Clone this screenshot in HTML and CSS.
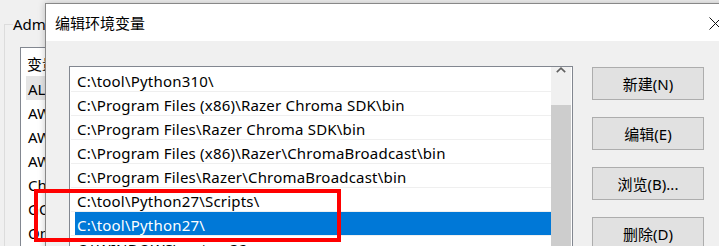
FILE: index.html
```html
<!DOCTYPE html>
<html lang="zh-CN">
<head>
<meta charset="utf-8">
<title>编辑环境变量</title>
<link rel="stylesheet" href="styles.css">
</head>
<body>
<div class="desk">
  <div class="bgwin">
    <fieldset class="group">
      <legend>Administrator 的用户变量(U)</legend>
      <div class="bglist">
        <div class="bghead">变量</div>
        <div class="bgrow sel">ALLUSERSPROFILE</div>
        <div class="bgrow">AWS_ACCESS_KEY</div>
        <div class="bgrow">AWS_REGION</div>
        <div class="bgrow">AWS_SECRET_KEY</div>
        <div class="bgrow">ChocolateyInstall</div>
        <div class="bgrow">GOPATH</div>
        <div class="bgrow">OneDrive</div>
      </div>
    </fieldset>
  </div>

  <div class="dialog">
    <div class="titlebar">
      <span class="title">编辑环境变量</span>
      <svg class="close" width="13" height="13" viewBox="0 0 13 13"><path d="M0.5 0.5 L12.5 12.5 M12.5 0.5 L0.5 12.5" stroke="#111" stroke-width="1" fill="none"/></svg>
    </div>
    <div class="body">
      <div class="list">
        <div class="items">
          <div class="row"><span class="cell">C:\tool\Python310\</span></div>
          <div class="row"><span class="cell">C:\Program Files (x86)\Razer Chroma SDK\bin</span></div>
          <div class="row"><span class="cell">C:\Program Files\Razer Chroma SDK\bin</span></div>
          <div class="row"><span class="cell">C:\Program Files (x86)\Razer\ChromaBroadcast\bin</span></div>
          <div class="row"><span class="cell">C:\Program Files\Razer\ChromaBroadcast\bin</span></div>
          <div class="row"><span class="cell">C:\tool\Python27\Scripts\</span></div>
          <div class="row selected"><span class="cell">C:\tool\Python27\</span></div>
          <div class="row"><span class="cell">C:\WINDOWS\system32</span></div>
        </div>
        <div class="scrollbar">
          <div class="arrow"><svg width="10" height="6" viewBox="0 0 10 6"><path d="M0.8 5.2 L5 1.2 L9.2 5.2" stroke="#606060" stroke-width="1.6" fill="none"/></svg></div>
          <div class="track"><div class="thumb"></div></div>
        </div>
      </div>
      <div class="buttons">
        <button class="btn">新建(N)</button>
        <button class="btn">编辑(E)</button>
        <button class="btn">浏览(B)...</button>
        <button class="btn">删除(D)</button>
      </div>
    </div>
  </div>

  <div class="highlight"></div>
</div>
</body>
</html>
```

FILE: styles.css
```css
* { box-sizing: border-box; }
html, body {
  margin: 0;
  padding: 0;
  width: 719px;
  height: 246px;
  overflow: hidden;
  background: #f0f0f0;
}
body {
  font-family: "Noto Sans", "Noto Sans CJK SC", sans-serif;
  font-size: 15px;
  color: #000;
}
.desk {
  position: relative;
  width: 719px;
  height: 246px;
  overflow: hidden;
}

/* background window */
.bgwin {
  padding: 14px 0 0 4px;
  width: 400px;
}
.group {
  margin: 0;
  border: 1px solid #dcdcdc;
  padding: 0 0 0 8px;
  min-width: 0;
  height: 300px;
}
.group legend {
  padding: 0;
  line-height: 20px;
  white-space: nowrap;
}
.bglist {
  margin: 13px 0 0 7px;
  background: #fff;
  border: 1px solid #828790;
  border-right: none;
  height: 260px;
  padding: 4px 0 0 5px;
}
.bghead {
  height: 24px;
  line-height: 24px;
  padding-left: 1px;
}
.bgrow {
  height: 24px;
  line-height: 24px;
  padding-top: 1px;
  padding-left: 2px;
  white-space: nowrap;
}
.bgrow.sel { background: #e5e5e5; }

/* dialog */
.dialog {
  position: absolute;
  left: 45px;
  top: 3px;
  width: 700px;
  height: 260px;
  border: 1px solid #888;
  background: #f0f0f0;
  box-shadow: 0 0 7px rgba(0, 0, 0, 0.22);
}
.titlebar {
  height: 37px;
  background: #fff;
  display: flex;
  align-items: center;
  justify-content: space-between;
  padding: 0 0 0 9px;
}
.title { line-height: 20px; }
.close { margin-right: 22px; margin-top: 1px; }

.body {
  display: flex;
  align-items: flex-start;
  padding: 25px 0 0 23px;
}
.list {
  width: 504px;
  height: 220px;
  border: 1px solid #828790;
  background: #fff;
  display: flex;
  flex: none;
}
.items {
  flex: 1;
  padding: 1px 0 0 1px;
  overflow: hidden;
}
.row {
  height: 24px;
  border-bottom: 1px solid #efefef;
  padding-left: 4px;
}
.cell {
  display: block;
  height: 23px;
  line-height: 23px;
  padding: 2px 0 0 2px;
  white-space: nowrap;
  letter-spacing: 0.2px;
}
.row.selected .cell {
  background: #0078d7;
  color: #fff;
}
.scrollbar {
  width: 20px;
  margin-right: 1px;
  background: #f0f0f0;
  display: flex;
  flex-direction: column;
}
.arrow {
  height: 21px;
  display: flex;
  align-items: center;
  justify-content: center;
}
.track { padding-top: 32px; }
.thumb {
  height: 200px;
  background: #cdcdcd;
}

.buttons {
  margin: 1px 0 0 19px;
  display: flex;
  flex-direction: column;
  gap: 17px;
}
.btn {
  width: 112px;
  height: 33px;
  border: 1px solid #adadad;
  background: #e1e1e1;
  font-family: inherit;
  font-size: 15px;
  color: #000;
  padding: 0;
  margin: 0;
}

/* red annotation */
.highlight {
  position: absolute;
  left: 34px;
  top: 189px;
  width: 307px;
  height: 53px;
  border: 4px solid #ff0000;
}
```
